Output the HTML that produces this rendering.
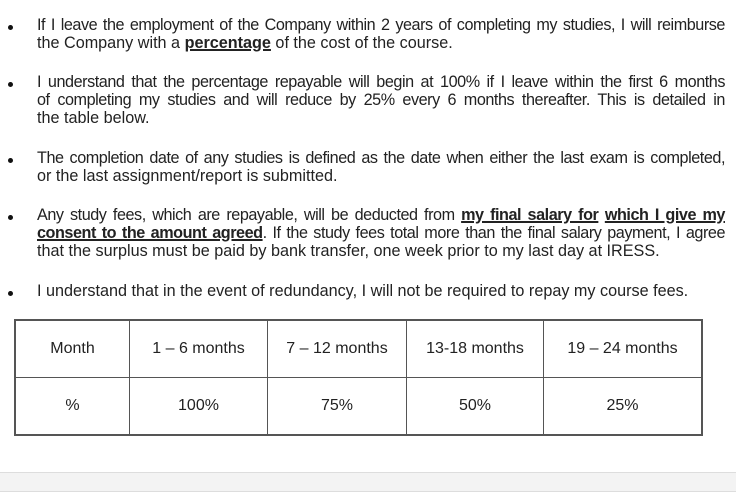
<!DOCTYPE html>
<html><head><style>
body{margin:0;width:736px;height:493px;background:#fff;position:relative;overflow:hidden;font-family:"Liberation Sans",Arial,sans-serif;color:#222;font-size:16.2px}
.l{position:absolute;left:37px;width:688px;white-space:nowrap;line-height:18px}
.j{text-align:justify;text-align-last:justify;white-space:normal;letter-spacing:-0.45px;word-spacing:-1px;height:18px}
.b{position:absolute;left:8px;width:5px;height:5px;border-radius:50%;background:#111}
u{font-weight:bold;text-decoration-thickness:1.5px}
table{position:absolute;left:14px;top:319px;width:689px;border-collapse:collapse;border:2px solid #555}
td{border:1px solid #555;height:56px;text-align:center;font-size:16px;padding:0}
.bar{position:absolute;left:0;top:472px;width:736px;height:18px;background:#f3f3f3;border-top:1px solid #ddd;border-bottom:1px solid #ddd}
</style></head><body>
<div class="b" style="top:25px"></div>
<div class="l j" style="top:16px">If I leave the employment of the Company within 2 years of completing my studies, I will reimburse</div>
<div class="l" style="top:34px">the Company with a <u>percentage</u> of the cost of the course.</div>
<div class="b" style="top:82px"></div>
<div class="l j" style="top:73px">I understand that the percentage repayable will begin at 100% if I leave within the first 6 months</div>
<div class="l j" style="top:91px">of completing my studies and will reduce by 25% every 6 months thereafter. This is detailed in</div>
<div class="l" style="top:109px">the table below.</div>
<div class="b" style="top:158px"></div>
<div class="l j" style="top:149px">The completion date of any studies is defined as the date when either the last exam is completed,</div>
<div class="l" style="top:167px">or the last assignment/report is submitted.</div>
<div class="b" style="top:215px"></div>
<div class="l j" style="top:206px">Any study fees, which are repayable, will be deducted from <u>my final salary for</u> <u>which I give my</u></div>
<div class="l j" style="top:224px"><u>consent to the amount agreed</u>. If the study fees total more than the final salary payment, I agree</div>
<div class="l" style="top:242px">that the surplus must be paid by bank transfer, one week prior to my last day at IRESS.</div>
<div class="b" style="top:291px"></div>
<div class="l" style="top:282px">I understand that in the event of redundancy, I will not be required to repay my course fees.</div>
<table><tr><td style="width:113px">Month</td><td style="width:137px">1 – 6 months</td><td style="width:138px">7 – 12 months</td><td style="width:136px">13-18 months</td><td>19 – 24 months</td></tr>
<tr><td>%</td><td>100%</td><td>75%</td><td>50%</td><td>25%</td></tr></table>
<div class="bar"></div>
</body></html>
